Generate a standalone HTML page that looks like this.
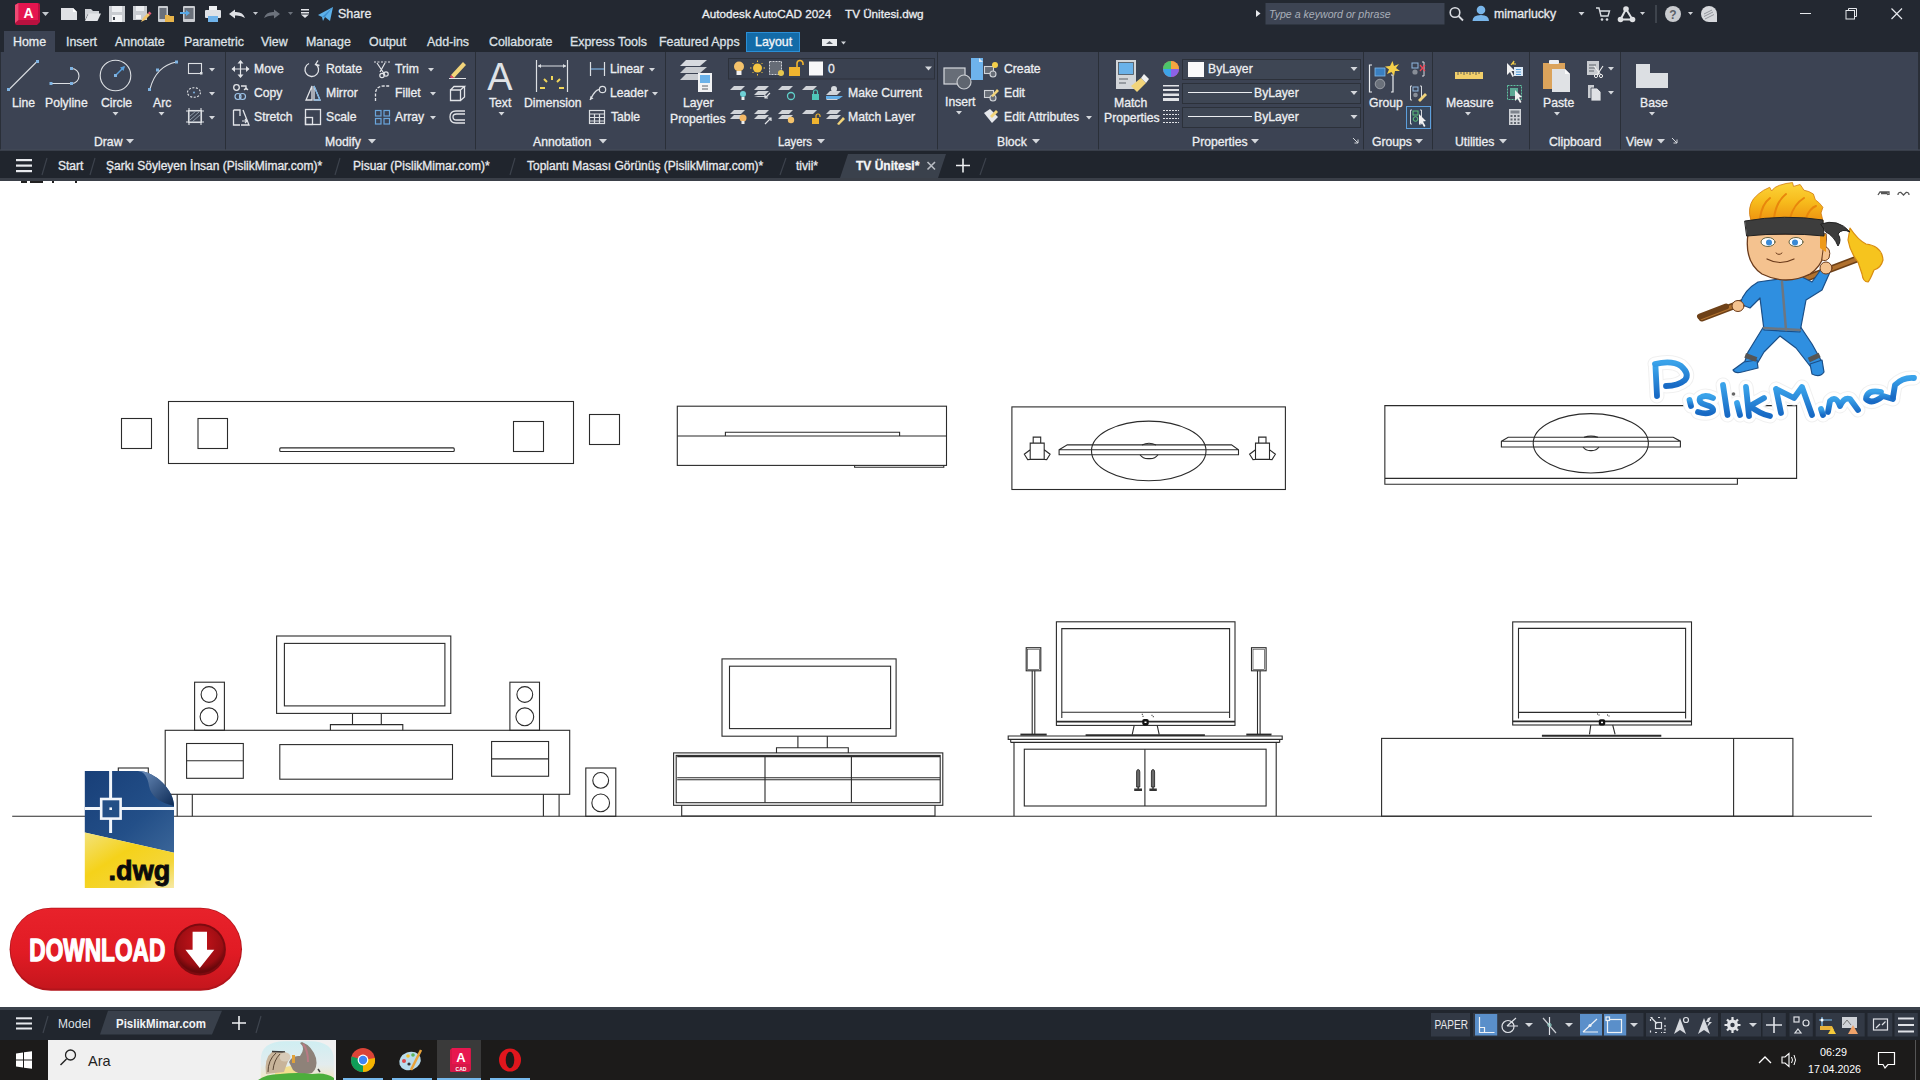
<!DOCTYPE html>
<html><head><meta charset="utf-8">
<style>
*{margin:0;padding:0;box-sizing:border-box}
html,body{width:1920px;height:1080px;overflow:hidden;background:#fff;font-family:"Liberation Sans",sans-serif}
svg{position:absolute;left:0;top:0}
text{font-family:"Liberation Sans",sans-serif}

</style></head><body>
<svg width="1920" height="1080" viewBox="0 0 1920 1080">
<!-- backgrounds -->
<rect x="0" y="0" width="1920" height="52" fill="#232831"/>
<rect x="0" y="52" width="1920" height="99" fill="#2a2f38"/>
<rect x="4" y="31" width="51" height="21" fill="#3c4353"/>
<g fill="#3c4353">
<rect x="1" y="52" width="224" height="98"/>
<rect x="226" y="52" width="249" height="98"/>
<rect x="476" y="52" width="189" height="98"/>
<rect x="666" y="52" width="271" height="98"/>
<rect x="938" y="52" width="160" height="98"/>
<rect x="1099" y="52" width="264" height="98"/>
<rect x="1364" y="52" width="68" height="98"/>
<rect x="1433" y="52" width="96" height="98"/>
<rect x="1530" y="52" width="90" height="98"/>
<rect x="1621" y="52" width="297" height="98"/>
</g>
<rect x="0" y="149" width="1920" height="2" fill="#434a58" opacity="0.55"/>
<rect x="0" y="151" width="1920" height="27" fill="#20252d"/>
<rect x="0" y="178" width="1920" height="3" fill="#3a3f48"/>

<!-- ===== TITLE BAR ===== -->
<g>
  <path d="M15,5 L18,3 H38 Q40,3 40,5 V22 L37,25 H17 Q15,25 15,23 Z" fill="#b8113f"/>
  <path d="M18.5,3 H37 Q38,3 38,4 V20 H18.5 Z" fill="#e5154f"/>
  <path d="M15,5 L18.5,3 V20 L15,23 Z" fill="#f04a74"/>
  <text x="28.5" y="17.5" font-size="14" font-weight="700" fill="#fff" text-anchor="middle">A</text>
  <path d="M42,12 H49 L45.5,16 Z" fill="#c4c8ce"/>
  <!-- new -->
  <path d="M61,8 H73 L77,12 V20 H61 Z" fill="#dfe1e5"/>
  <path d="M73,8 V12 H77 Z" fill="#ffffff"/>
  <!-- open -->
  <path d="M85,9 H91 L93,11 H99 V14 H88 L85,20 Z" fill="#cfd2d7"/>
  <path d="M85,21 L88.5,13.5 H101 L97.5,21 Z" fill="#e3e5e9"/>
  <!-- save -->
  <rect x="109" y="6" width="16" height="16" fill="#c9ccd1"/>
  <rect x="112" y="6" width="10" height="6" fill="#eceef1"/>
  <rect x="112" y="15" width="10" height="7" fill="#f4f5f7"/>
  <rect x="113" y="17" width="2" height="3" fill="#3a3f48"/>
  <!-- save as -->
  <rect x="133" y="6" width="14" height="14" fill="#c9ccd1"/>
  <rect x="136" y="6" width="8" height="5" fill="#eceef1"/>
  <rect x="136" y="15" width="5" height="4" fill="#f4f5f7"/>
  <path d="M141,22 L143,18 L148,13 L150,15 L145,20 Z" fill="#f2c46b"/>
  <path d="M148,13 L149.5,11.5 L151.5,13.5 L150,15 Z" fill="#e85b7a"/>
  <!-- sheet/tablet with folder -->
  <rect x="158" y="6" width="10" height="16" rx="1" fill="#c9ccd1"/>
  <rect x="159.5" y="8" width="7" height="11" fill="#6a707a"/>
  <path d="M165,15 H169 L170,16 H174 V22 H165 Z" fill="#e8b44a"/>
  <!-- tablet with arrow -->
  <rect x="183" y="6" width="12" height="16" rx="1" fill="#c9ccd1"/>
  <rect x="184.5" y="8" width="9" height="11" fill="#6a707a"/>
  <path d="M180,12 H186 V10 L190,13 L186,16 V14 H180 Z" fill="#59a9e6"/>
  <!-- plot -->
  <rect x="209" y="6" width="8" height="5" fill="#eef0f2"/>
  <rect x="205" y="10" width="16" height="8" rx="1" fill="#dfe2e6"/>
  <rect x="208" y="16" width="10" height="6" fill="#6fb3ea"/>
  <!-- undo -->
  <path d="M229,14 L235,9.5 V12 Q243,11.5 245,18 Q241,15 235,15.5 V18.5 Z" fill="#dfe1e5"/>
  <path d="M253,12 H258 L255.5,15 Z" fill="#c4c8ce"/>
  <!-- redo -->
  <path d="M280,14 L274,9.5 V12 Q266,11.5 264,18 Q268,15 274,15.5 V18.5 Z" fill="#6c727c"/>
  <path d="M288,12 H293 L290.5,15 Z" fill="#6c727c"/>
  <!-- customize -->
  <rect x="301" y="9" width="8" height="1.5" fill="#e2e4e8"/>
  <rect x="301" y="12" width="8" height="1.5" fill="#e2e4e8"/>
  <path d="M301,14.5 H309 L305,18 Z" fill="#e2e4e8"/>
  <!-- share -->
  <path d="M318,15 L333,7 L330,21 L325,17 L323,21 L322,17 Z" fill="#5db1ea"/>
  <path d="M322,17 L333,7 L325,17 Z" fill="#3d8fd0"/>
  <text x="338" y="18" font-size="12.5" fill="#e6e8ec" stroke="#e6e8ec" stroke-width="0.3">Share</text>

  <text x="702" y="18" font-size="11.7" fill="#eceef1" stroke="#eceef1" stroke-width="0.3">Autodesk AutoCAD 2024</text>
  <text x="845" y="18" font-size="11.7" fill="#eceef1" stroke="#eceef1" stroke-width="0.3">TV Ünitesi.dwg</text>

  <path d="M1256,10 L1260.5,13.5 L1256,17 Z" fill="#e6e8ec"/>
  <rect x="1265.5" y="3" width="179" height="21.5" fill="#3d4453"/>
  <text x="1269" y="18" font-size="10.6" font-style="italic" fill="#a9afb9">Type a keyword or phrase</text>
  <circle cx="1455" cy="12.5" r="4.8" fill="none" stroke="#d8dbe0" stroke-width="1.6"/>
  <path d="M1458.5,16 L1463,20.5" stroke="#d8dbe0" stroke-width="1.8"/>
  <circle cx="1481" cy="10" r="4.3" fill="#79b6ea"/>
  <path d="M1472.5,21 Q1472.5,15 1481,15 Q1489,15 1489,21 Z" fill="#79b6ea"/>
  <text x="1494" y="18" font-size="12.3" fill="#e8eaee" stroke="#e8eaee" stroke-width="0.3">mimarlucky</text>
  <path d="M1578.5,12 H1584.5 L1581.5,15.5 Z" fill="#d0d3d8"/>
  <path d="M1596,8 H1599 L1601,16 H1608 L1609.5,11 H1600" fill="none" stroke="#d8dbe0" stroke-width="1.4"/>
  <circle cx="1602" cy="19.5" r="1.3" fill="#d8dbe0"/><circle cx="1607" cy="19.5" r="1.3" fill="#d8dbe0"/>
  <path d="M1626,9 L1620.5,19.5 H1632.5 Z" fill="none" stroke="#dfe1e4" stroke-width="2"/><circle cx="1626" cy="9" r="2.8" fill="#dfe1e4"/><circle cx="1620.5" cy="19.5" r="2.8" fill="#dfe1e4"/><circle cx="1632.5" cy="19.5" r="2.8" fill="#dfe1e4"/>
  <path d="M1640,12 H1645 L1642.5,15 Z" fill="#d0d3d8"/>
  <rect x="1655.5" y="5" width="1" height="18" fill="#5a606a"/>
  <circle cx="1673" cy="14" r="8" fill="#c9cbcf"/>
  <text x="1673" y="18.5" font-size="12" font-weight="700" fill="#5b6068" text-anchor="middle">?</text>
  <path d="M1688,12 H1693 L1690.5,15 Z" fill="#d0d3d8"/>
  <circle cx="1709" cy="14" r="8" fill="#d6d8dc"/><rect x="1709" y="14" width="8" height="8" fill="#d6d8dc"/>
  <path d="M1704,14 L1712,10 M1704,16.5 L1713,12 M1705,19 L1714,14.5" stroke="#8a8e95" stroke-width="0.9"/>
  <rect x="1800" y="13" width="11" height="1" fill="#e6e8ec"/>
  <rect x="1846" y="10.5" width="8.5" height="8.5" fill="none" stroke="#e6e8ec" stroke-width="1"/>
  <path d="M1848.5,10.5 V8.5 H1856.5 V16.5 H1854.5" fill="none" stroke="#e6e8ec" stroke-width="1"/>
  <path d="M1891.5,8.5 L1902,19 M1902,8.5 L1891.5,19" stroke="#e6e8ec" stroke-width="1.2"/>
</g>

<!-- ===== TABS ===== -->
<g font-size="12.4" fill="#dde0e5" stroke="#dde0e5" stroke-width="0.3">
  <text x="13" y="46" fill="#f2f3f5">Home</text>
  <text x="66" y="46">Insert</text>
  <text x="115" y="46">Annotate</text>
  <text x="184" y="46">Parametric</text>
  <text x="261" y="46">View</text>
  <text x="306" y="46">Manage</text>
  <text x="369" y="46">Output</text>
  <text x="427" y="46">Add-ins</text>
  <text x="489" y="46">Collaborate</text>
  <text x="570" y="46">Express Tools</text>
  <text x="659" y="46">Featured Apps</text>
</g>
<rect x="746" y="32" width="54" height="20" fill="#136ba8"/>
<rect x="746.5" y="32.5" width="53" height="19" fill="none" stroke="#2b8fd6" stroke-width="1"/>
<text x="755" y="46" font-size="12.4" fill="#f2f5f8" stroke="#f2f5f8" stroke-width="0.3">Layout</text>
<rect x="822" y="39" width="15" height="7" fill="#e9ebee"/>
<path d="M826,44 L829.5,41 L833,44 Z" fill="#555b64"/>
<path d="M841,41.5 H846 L843.5,44.5 Z" fill="#d0d3d8"/>
<!-- dropdown bgs -->
<rect x="728.5" y="58.5" width="206" height="20.5" fill="#3a4150" stroke="#2c313b"/>
<g fill="#3e4654" stroke="#2c313a" stroke-width="1">
  <rect x="1182.5" y="59.5" width="178" height="20"/>
  <rect x="1182.5" y="83.5" width="178" height="20"/>
  <rect x="1182.5" y="107.5" width="178" height="20"/>
</g>
<!-- ===== RIBBON LABELS ===== -->
<g font-size="12.2" fill="#eceef1" stroke="#eceef1" stroke-width="0.3">
  <text x="12" y="107">Line</text>
  <text x="45" y="107">Polyline</text>
  <text x="101" y="107">Circle</text>
  <text x="153" y="107">Arc</text>
  <text x="94" y="146">Draw</text>
  <text x="254" y="73">Move</text><text x="326" y="73">Rotate</text><text x="395" y="73">Trim</text>
  <text x="254" y="97">Copy</text><text x="326" y="97">Mirror</text><text x="395" y="97">Fillet</text>
  <text x="254" y="121">Stretch</text><text x="326" y="121">Scale</text><text x="395" y="121">Array</text>
  <text x="325" y="146">Modify</text>
  <text x="489" y="107">Text</text>
  <text x="524" y="107">Dimension</text>
  <text x="610" y="73">Linear</text><text x="610" y="97">Leader</text><text x="611" y="121">Table</text>
  <text x="533" y="146">Annotation</text>
  <text x="683" y="107">Layer</text><text x="670" y="122.5">Properties</text>
  <text x="828" y="73">0</text>
  <text x="848" y="97">Make Current</text><text x="848" y="121">Match Layer</text>
  <text x="778" y="146" textLength="34" lengthAdjust="spacingAndGlyphs">Layers</text>
  <text x="945" y="106">Insert</text>
  <text x="1004" y="73">Create</text><text x="1004" y="97">Edit</text><text x="1004" y="121">Edit Attributes</text>
  <text x="997" y="146">Block</text>
  <text x="1114" y="107">Match</text><text x="1104" y="122.3">Properties</text>
  <text x="1208" y="73">ByLayer</text><text x="1254" y="97">ByLayer</text><text x="1254" y="121">ByLayer</text>
  <text x="1192" y="146">Properties</text>
  <text x="1369" y="107">Group</text>
  <text x="1372" y="146">Groups</text>
  <text x="1446" y="107">Measure</text>
  <text x="1455" y="146">Utilities</text>
  <text x="1543" y="107">Paste</text>
  <text x="1549" y="146">Clipboard</text>
  <text x="1640" y="107">Base</text>
  <text x="1626" y="146">View</text>
</g>
<!-- dropdown arrows -->
<g fill="#d4d7dc">
  <path d="M112.5,112 H118.5 L115.5,115.5 Z"/>
  <path d="M158.5,112 H164.5 L161.5,115.5 Z"/>
  <path d="M209,68 H215 L212,71.5 Z"/><path d="M209,92 H215 L212,95.5 Z"/><path d="M209,116 H215 L212,119.5 Z"/>
  <path d="M126,139 H134 L130,143.5 Z"/>
  <path d="M428,68 H434 L431,71.5 Z"/><path d="M430,92 H436 L433,95.5 Z"/><path d="M430,116 H436 L433,119.5 Z"/>
  <path d="M368,139 H376 L372,143.5 Z"/>
  <path d="M498.5,112 H504.5 L501.5,115.5 Z"/>
  <path d="M649,68 H655 L652,71.5 Z"/><path d="M652,92 H658 L655,95.5 Z"/>
  <path d="M599,139 H607 L603,143.5 Z"/>
  <path d="M817,139 H825 L821,143.5 Z"/>
  <path d="M956,111 H962 L959,114.5 Z"/>
  <path d="M1086,116 H1092 L1089,119.5 Z"/>
  <path d="M1032,139 H1040 L1036,143.5 Z"/>
  <path d="M1251,139 H1259 L1255,143.5 Z"/>
  <path d="M1415,139 H1423 L1419,143.5 Z"/>
  <path d="M1465,112 H1471 L1468,115.5 Z"/>
  <path d="M1499,139 H1507 L1503,143.5 Z"/>
  <path d="M1554,112 H1560 L1557,115.5 Z"/>
  <path d="M1608,67 H1614 L1611,70.5 Z"/><path d="M1608,91 H1614 L1611,94.5 Z"/>
  <path d="M1649,112 H1655 L1652,115.5 Z"/>
  <path d="M1657,139 H1665 L1661,143.5 Z"/>
</g>
<g stroke="#d4d7dc" stroke-width="1" fill="none">
  <path d="M1353,138 L1358,143 M1358,139.5 V143 H1354.5"/>
  <path d="M1672,138 L1677,143 M1677,139.5 V143 H1673.5"/>
</g>

<!-- ===== DRAW ICONS ===== -->
<g stroke="#dcdfe3" stroke-width="1.1" fill="none">
  <path d="M9,89.5 L37,61.5"/>
  <path d="M52,83.5 H71.5 M71.5,68.5 A7.5,7.5 0 0 1 71.5,83.5"/>
  <circle cx="115.5" cy="75.5" r="15.3"/>
  <path d="M150,89 Q156,66 176.5,62"/>
  <rect x="188.5" y="63.5" width="13" height="10"/>
  <ellipse cx="194" cy="92.5" rx="6.5" ry="4.8" stroke-dasharray="2,1.5"/>
  <rect x="188.5" y="110.5" width="13" height="12"/>
  <path d="M186,111 H204 M186,122 H204 M189,108 V125 M201,108 V125"/>
</g>
<g stroke="#9aa7b4" stroke-width="0.9">
  <path d="M190,120 L199,112 M192,122 L201,114 M189,117 L196,111"/>
</g>
<path d="M115.5,75.5 L124,67" stroke="#59a2e0" stroke-width="1.4"/>
<path d="M125,66 L120,67.5 L123.5,71 Z" fill="#59a2e0"/>
<g fill="#7fb3e2">
  <rect x="7" y="88" width="3" height="3"/><rect x="36" y="60" width="3" height="3"/>
  <rect x="49.5" y="82" width="3" height="3"/><rect x="70" y="82" width="3" height="3"/><rect x="70" y="67" width="3" height="3"/>
  <rect x="114" y="74" width="3" height="3"/>
  <rect x="148" y="88" width="3" height="3"/><rect x="156" y="68.5" width="3" height="3"/><rect x="175" y="60.5" width="3" height="3"/>
  <rect x="200" y="72" width="2.5" height="2.5" fill="#dcdfe3"/>
  <circle cx="194" cy="92.5" r="1"/>
</g>

<!-- ===== MODIFY ICONS ===== -->
<g stroke="#e2e4e8" stroke-width="1.2" fill="none">
  <!-- move -->
  <path d="M240.5,61 V77 M232.5,69 H248.5"/>
</g>
<g fill="#e2e4e8">
  <path d="M240.5,60 L237.5,63.5 H243.5 Z M240.5,78 L237.5,74.5 H243.5 Z M231.5,69 L235,66 V72 Z M249.5,69 L246,66 V72 Z"/>
</g>
<g stroke="#e2e4e8" stroke-width="1.3" fill="none">
  <!-- rotate -->
  <path d="M315.5,64 A6.8,6.8 0 1 1 309,63.5"/>
  <!-- copy -->
  <circle cx="236.5" cy="87.5" r="2.8"/><path d="M241,86 H246 V90"/>
  <!-- mirror -->
  <path d="M312,86 V100 H306 Z M314,86 V100 H320 Z"/>
  <!-- fillet -->
  <path d="M375.5,101 V94 Q375.5,86 384,86 H390" stroke-dasharray="3,1.5"/>
  <!-- stretch -->
  <path d="M233.5,110 H240 V116 M233.5,110 V125 H240 M243,110 L249,125 H241"/>
  <!-- scale -->
  <rect x="305.5" y="109.5" width="15" height="15"/>
  <rect x="305.5" y="117.5" width="7" height="7"/>
  <!-- offset -->
  <path d="M465,111 H456 Q450,111 450,117 Q450,123 456,123 H465 M465,114 H456.5 Q453,114 453,117 Q453,120 456.5,120 H465"/>
  <!-- explode 3d box -->
  <path d="M450.5,90 H460.5 V100.5 H450.5 Z M450.5,90 L454,86.5 H464.5 L460.5,90 M464.5,86.5 V97 L460.5,100.5"/>
</g>
<path d="M318,60.5 L315.5,64.5 L319.5,65.5" stroke="#e2e4e8" stroke-width="1.3" fill="none"/>
<g stroke="#9ec5ea" stroke-width="1.2" fill="none">
  <circle cx="238" cy="96.5" r="3"/><circle cx="242.5" cy="96.5" r="3"/>
  <path d="M314,86 L320,100 H314" stroke="#74b2e6"/>
  <rect x="375.5" y="110.5" width="5.5" height="5.5" stroke="#6aa6dc"/><rect x="384" y="110.5" width="5.5" height="5.5" stroke="#6aa6dc"/>
  <rect x="375.5" y="118.5" width="5.5" height="5.5" stroke="#6aa6dc"/><rect x="384" y="118.5" width="5.5" height="5.5" stroke="#6aa6dc"/>
  <path d="M242,121 H247 M245,119 L247,121 L245,123" stroke="#e2e4e8"/>
</g>
<g stroke="#e2e4e8" stroke-width="1.2" fill="none">
  <path d="M246,88 L244,90 M246,88 L248,90" />
  <!-- trim scissors -->
  <path d="M374,62 H390" stroke-dasharray="2,1.5"/>
  <path d="M377,63 L385,75 M385,63 L380,72"/>
  <circle cx="382" cy="75.5" r="2.2"/><circle cx="386" cy="74" r="2.2"/>
</g>
<!-- erase -->
<path d="M451,75 L463,62 L466,65 L454,78 Z" fill="#f2d47a"/>
<path d="M451,75 L454,78 L452.5,79 L450,77 Z" fill="#e9455e"/>
<rect x="449" y="78" width="17" height="1" fill="#e2e4e8"/>

<!-- ===== ANNOTATION ICONS ===== -->
<text x="500" y="90" font-size="38" fill="#dfe2e6" text-anchor="middle">A</text>
<g stroke="#dcdfe3" stroke-width="1.2" fill="none">
  <path d="M536.5,60 V92 M567.5,60 V92 M538,66 H566"/>
  <path d="M590.5,62 V76 M604.5,62 V76" />
  <path d="M590,100 Q596,88 600,90" />
  <circle cx="602.5" cy="89.5" r="3.2"/>
  <rect x="589.5" y="110.5" width="15" height="13"/>
  <path d="M589.5,114 H604.5 M589.5,117.5 H604.5 M589.5,121 H604.5 M594.5,114 V123.5 M599.5,114 V123.5"/>
</g>
<path d="M538,66 L541,64 V68 Z M566,66 L563,64 V68 Z" fill="#dcdfe3"/>
<path d="M591,69 H604" stroke="#7fb3e2" stroke-width="1.2"/>
<path d="M590,100 L590.5,96 L593.5,98.5 Z" fill="#dcdfe3"/>
<g stroke="#f1d65a" stroke-width="2">
  <path d="M552,76 V80 M544,79 L547,82 M560,79 L557,82 M540,88 H545 M559,88 H564"/>
</g>

<!-- ===== LAYERS ===== -->
<g fill="#d7dadf">
  <path d="M686,60 H707 L700,66 H680 Z"/>
  <path d="M686,67 H707 L700,73 H680 Z" fill="#c9ccd1"/>
  <path d="M686,74 H705 V80 H680 Z" fill="#c9ccd1"/>
</g>
<rect x="698" y="73" width="14" height="19" fill="#f1f2f4"/>
<rect x="700" y="75" width="10" height="8" fill="#6ab2ea"/>
<path d="M702,86 H708 M702,89 H708" stroke="#5a6068" stroke-width="1"/>
<path d="M925,66.5 H932 L928.5,70.5 Z" fill="#d4d7dc"/>
<circle cx="739" cy="66.5" r="5" fill="#f4c26b"/><rect x="736.5" y="71" width="5" height="4" fill="#f0f0f0"/>
<circle cx="757.5" cy="68" r="4.5" fill="#f4c543"/>
<g stroke="#f4c543" stroke-width="1"><path d="M757.5,60.5 V62 M757.5,74 V75.5 M750,68 H751.5 M763.5,68 H765 M752.5,63 L753.5,64 M762.5,63 L761.5,64 M752.5,73 L753.5,72 M762.5,73 L761.5,72"/></g>
<rect x="769.5" y="61.5" width="12" height="13" fill="#666c76" stroke="#d0d3d8" stroke-dasharray="2,1"/>
<circle cx="781" cy="73" r="3" fill="#e8c84f"/>
<rect x="789" y="67" width="11" height="9" fill="#f0b42f"/>
<path d="M797,67 V63.5 A3,3 0 0 1 803,63.5 V65" stroke="#f0b42f" stroke-width="1.6" fill="none"/>
<rect x="809" y="61.5" width="14" height="14" fill="#f7f7f8"/>
<!-- layer small icons rows -->
<g fill="#d0d3d8">
  <path d="M734,86 H745 L741,90 H730 Z"/><path d="M758,86 H769 L765,90 H754 Z"/><path d="M782,86 H793 L789,90 H778 Z"/><path d="M806,86 H817 L813,90 H802 Z"/>
  <path d="M758,91 H769 L765,95 H754 Z"/><path d="M758,96 H769 L765,97 H754 Z"/>
  <path d="M734,110 H745 L741,114 H730 Z"/><path d="M734,115 H745 L741,119 H730 Z"/>
  <path d="M758,110 H769 L765,114 H754 Z"/><path d="M758,115 H769 L765,119 H754 Z"/>
  <path d="M782,110 H793 L789,114 H778 Z"/><path d="M782,115 H793 L789,119 H778 Z"/>
  <path d="M806,110 H817 L813,114 H802 Z"/>
  <path d="M830,91 H841 L837,95 H826 Z"/><path d="M830,96 H841 L837,100 H826 Z"/>
  <path d="M830,110 H841 L837,114 H826 Z"/><path d="M830,115 H841 L837,119 H826 Z"/>
</g>
<circle cx="743" cy="94" r="3" fill="#6fd0d6"/><rect x="741.5" y="97" width="3" height="3" fill="#eee"/>
<path d="M770,93 L765,98 M765,95 V98 H768" stroke="#e2e4e8" stroke-width="1.2" fill="none"/>
<circle cx="791" cy="96" r="3.5" fill="none" stroke="#5fd0c9" stroke-width="1.3"/>
<rect x="812" y="94" width="7" height="6" fill="#4fc6b9"/>
<path d="M813.5,94 V92 A2,2 0 0 1 817.5,92 V94" stroke="#4fc6b9" stroke-width="1.2" fill="none"/>
<circle cx="834" cy="89" r="3" fill="#d8dbe0"/>
<path d="M826,96 H843 L839,99 H826" fill="#62aee8"/>
<circle cx="743" cy="118" r="3.5" fill="#f4b866"/><rect x="741.5" y="121" width="3" height="3" fill="#eee"/>
<path d="M765,124 L771,118 M768,118 H771 V121" stroke="#e2e4e8" stroke-width="1.2" fill="none"/>
<circle cx="791" cy="120" r="3.2" fill="#f4c26b"/>
<rect x="812" y="118" width="7" height="6" fill="#f0b42f"/>
<path d="M816,118 V116 A2,2 0 0 1 820,116 V117" stroke="#f0b42f" stroke-width="1.2" fill="none"/>
<path d="M837,124 L843,117 L845,119 L839,125 Z" fill="#f2d47a"/>

<!-- ===== BLOCK ===== -->
<rect x="971" y="58" width="12" height="22" fill="#6eb3ec"/>
<path d="M979,58 L983,62 H979 Z" fill="#dbe9f6"/>
<rect x="944" y="68" width="21" height="16" fill="#676d77" stroke="#d6d9de" stroke-width="1.2"/>
<circle cx="964" cy="82" r="7" fill="#5f656f" stroke="#c9ccd1" stroke-width="1.2"/>
<g stroke="#d0d3d8" stroke-width="1.1" fill="#666c76">
  <rect x="984.5" y="66.5" width="9" height="7"/><circle cx="993" cy="74" r="3"/>
  <rect x="984.5" y="90.5" width="9" height="7"/><circle cx="993" cy="98" r="3"/>
</g>
<circle cx="995" cy="65" r="3" fill="#f4cf4a"/>
<path d="M991,96 L997,89 L999,91 L993,97 Z" fill="#f2d47a"/>
<path d="M984,113 L990,109 L998,117 L992,123 Z" fill="#e6e8ec"/>
<path d="M990,116 L996,110 L998,112 L992,118 Z" fill="#f2d47a"/>

<!-- ===== PROPERTIES ===== -->
<rect x="1116" y="60" width="20" height="29" fill="#d3d6da"/>
<rect x="1118.5" y="62.5" width="15" height="12" fill="#6ab2ea" stroke="#4b5159" stroke-width="0.8"/>
<path d="M1119,79 H1128 M1119,83 H1126" stroke="#5a6068" stroke-width="1"/>
<path d="M1131,86 L1141,78 L1146,83 L1137,92 Z" fill="#f2d47a"/>
<path d="M1141,78 L1144,74 L1149,79 L1146,83 Z" fill="#f0f0f0"/>
<circle cx="1171" cy="69" r="8" fill="#e85b5b"/>
<path d="M1171,69 L1171,61 A8,8 0 0 1 1179,69 Z" fill="#f4a640"/>
<path d="M1171,69 L1179,69 A8,8 0 0 1 1171,77 Z" fill="#8b62e8"/>
<path d="M1171,69 L1171,77 A8,8 0 0 1 1163,69 Z" fill="#3da4e8"/>
<path d="M1171,69 L1163,69 A8,8 0 0 1 1171,61 Z" fill="#4cc46a"/>
<g fill="#e2e4e8"><rect x="1163" y="85" width="16" height="1.5"/><rect x="1163" y="89" width="16" height="2"/><rect x="1163" y="93.5" width="16" height="2.5"/><rect x="1163" y="98" width="16" height="3"/></g>
<g stroke="#e2e4e8" stroke-width="1" stroke-dasharray="2,1"><path d="M1163,110.5 H1179 M1163,114.5 H1179 M1163,118.5 H1179 M1163,122.5 H1179"/></g>
<rect x="1188" y="62" width="16" height="15" fill="#fafafa"/>
<path d="M1188,92.5 H1252 M1188,116.5 H1252" stroke="#eceef1" stroke-width="1"/>
<g fill="#d4d7dc"><path d="M1350.5,67 H1357.5 L1354,71 Z"/><path d="M1350.5,91 H1357.5 L1354,95 Z"/><path d="M1350.5,115 H1357.5 L1354,119 Z"/></g>

<!-- ===== GROUPS ===== -->
<path d="M1372,65 H1369.5 V92 H1372 M1391,75 H1393 V92 H1391" stroke="#eceef1" stroke-width="1.2" fill="none"/>
<rect x="1375" y="68" width="10" height="8" fill="#3a7fc0" stroke="#7fb8ea" stroke-width="0.8"/>
<circle cx="1380" cy="84" r="4.8" fill="#6b717b" stroke="#a7abb2" stroke-width="0.8"/>
<path d="M1392.5,61 L1394,66 L1399,64 L1396,68 L1400,71 L1395,71 L1394,76 L1391.5,72 L1387,74 L1389,69.5 L1385,66.5 L1390,66 Z" fill="#f4cf4a"/>
<g stroke="#d6d9de" stroke-width="1" fill="none">
  <path d="M1422,62 H1424 V76 H1422"/>
  <path d="M1412,86 H1410.5 V100 H1412 M1420,86 H1421.5 V100 H1420"/>
</g>
<rect x="1412" y="63" width="6" height="5" fill="none" stroke="#8fb8e0"/>
<circle cx="1415" cy="72" r="2.6" fill="#888e98"/>
<path d="M1420,65 L1425,71 M1425,65 L1420,71" stroke="#ee4455" stroke-width="1.2"/>
<rect x="1413" y="87" width="5" height="4" fill="none" stroke="#8fb8e0"/><circle cx="1415.5" cy="95" r="2.3" fill="#888e98"/>
<path d="M1418,100 L1425,93 L1427,95 L1420,102 Z" fill="#f2d47a"/>
<rect x="1406.5" y="106.5" width="24" height="22" fill="#37475c" stroke="#5d9fdc" stroke-width="1"/>
<path d="M1412,110 H1410.5 V124 H1412 M1420,110 H1421.5 V124 H1420" stroke="#d6d9de" stroke-width="1" fill="none"/>
<rect x="1413" y="111" width="5" height="4" fill="none" stroke="#5fc27a"/><circle cx="1415.5" cy="119" r="2.3" fill="none" stroke="#5fc27a"/>
<path d="M1419,114 L1419,125 L1421.5,122.5 L1424,127 L1425.5,126 L1423,121.5 L1426,121 Z" fill="#f0f0f0"/>

<!-- ===== UTILITIES ===== -->
<rect x="1455" y="72" width="28" height="7" fill="#f2cf6a"/>
<path d="M1458,72 V75 M1461,72 V74 M1464,72 V75 M1467,72 V74 M1470,72 V75 M1473,72 V74 M1476,72 V75 M1479,72 V74" stroke="#3b4351" stroke-width="0.8"/>
<path d="M1507,63 L1507,75 L1510,72 L1512.5,77 L1514,76 L1511.5,71 L1515,71 Z" fill="#f0f0f0"/>
<rect x="1514" y="67" width="9" height="9" fill="#dce9f6"/>
<path d="M1516,69.5 H1521 M1516,72 H1521 M1516,74.5 H1521" stroke="#3d8fd0" stroke-width="0.9"/>
<path d="M1511,65 L1514,61 L1513,64 L1516,64" stroke="#f4cf4a" stroke-width="1.2" fill="none"/>
<rect x="1507.5" y="85.5" width="14" height="14" fill="none" stroke="#5fc2a0" stroke-dasharray="2,1"/>
<rect x="1510" y="88" width="8" height="8" fill="#5aa894"/>
<path d="M1515,90 L1515,101 L1517.5,98.5 L1520,103 L1521.5,102 L1519,97.5 L1522,97 Z" fill="#f0f0f0"/>
<rect x="1509" y="109" width="12" height="16" fill="#cfd2d7"/>
<rect x="1510.5" y="110.5" width="9" height="3" fill="#7d838c"/>
<g fill="#5e646d"><rect x="1510.5" y="115" width="2" height="2"/><rect x="1514" y="115" width="2" height="2"/><rect x="1517.5" y="115" width="2" height="2"/><rect x="1510.5" y="118.5" width="2" height="2"/><rect x="1514" y="118.5" width="2" height="2"/><rect x="1517.5" y="118.5" width="2" height="2"/><rect x="1510.5" y="122" width="2" height="2"/><rect x="1514" y="122" width="2" height="2"/><rect x="1517.5" y="122" width="2" height="2"/></g>

<!-- ===== CLIPBOARD ===== -->
<rect x="1543" y="63" width="22" height="26" fill="#dba35b"/>
<rect x="1549" y="60" width="10" height="4" rx="1" fill="#eceef1"/>
<path d="M1552,69 H1565 L1570,74 V92 H1552 Z" fill="#e0e2e5"/>
<path d="M1565,69 V74 H1570 Z" fill="#fafafa"/>
<rect x="1587" y="61" width="12" height="14" fill="#c9ccd1"/>
<path d="M1589,65 H1596 M1589,68 H1595 M1589,71 H1594" stroke="#5a6068" stroke-width="1"/>
<path d="M1594,66 L1601,75 M1603,66 L1597,75" stroke="#f0f0f0" stroke-width="1.1"/>
<circle cx="1596" cy="76" r="1.6" fill="none" stroke="#f0f0f0"/><circle cx="1601" cy="76" r="1.6" fill="none" stroke="#f0f0f0"/>
<path d="M1588,85 H1594 V98 H1588 Z" fill="#c9ccd1"/>
<path d="M1591,88 H1597 L1601,92 V101 H1591 Z" fill="#dfe1e5" stroke="#3b4351" stroke-width="0.8"/>

<!-- ===== VIEW ===== -->
<path d="M1636,64 H1650 V73 H1668 V88 H1636 Z" fill="#dcdfe3"/>
<!-- ===== FILE TABS ===== -->
<path d="M840,178 L848,154 H946 L938,178 Z" fill="#3a414c"/>
<g fill="#e8eaee"><rect x="16" y="159" width="16" height="2.2"/><rect x="16" y="164.5" width="16" height="2.2"/><rect x="16" y="170" width="16" height="2.2"/></g>
<g stroke="#3c424c" stroke-width="1.2">
  <path d="M42,175 L47,158 M90,175 L95,158 M335,175 L340,158 M510,175 L515,158 M780,175 L786,158 M980,175 L986,158"/>
</g>
<g font-size="12" fill="#e8eaee" stroke="#e8eaee" stroke-width="0.3">
  <text x="58" y="170">Start</text>
  <text x="106" y="170">Şarkı Söyleyen İnsan (PislikMimar.com)*</text>
  <text x="353" y="170">Pisuar (PislikMimar.com)*</text>
  <text x="527" y="170">Toplantı Masası Görünüş (PislikMimar.com)*</text>
  <text x="796" y="170">tivii*</text>
  <text x="856" y="170" font-weight="700" fill="#f4f5f7" stroke="#f4f5f7">TV Ünitesi*</text>
</g>
<path d="M927.5,162 L935,169.5 M935,162 L927.5,169.5" stroke="#b9bdc4" stroke-width="1.6"/>
<path d="M963,158.5 V172.5 M956,165.5 H970" stroke="#eef0f2" stroke-width="1.6"/>
<!-- ===== DRAWING AREA ===== -->
<rect x="0" y="181" width="1920" height="826" fill="#ffffff"/>
<g fill="none" stroke="#2b2b2b" stroke-width="1.1">
  <!-- D1 -->
  <rect x="121.5" y="418.5" width="30" height="30"/>
  <rect x="168.5" y="401.5" width="405" height="62"/>
  <rect x="198" y="418.5" width="29.5" height="30"/>
  <rect x="513.5" y="421.5" width="30" height="30"/>
  <rect x="589.5" y="414.5" width="30" height="30"/>
  <rect x="279.75" y="447.9" width="174.5" height="3.6" rx="1"/>
  <!-- D2 -->
  <rect x="677.3" y="406.2" width="269.2" height="59.2"/>
  <path d="M677.3,436 H946.5"/>
  <path d="M725.4,436 V432.3 H899.6 V436"/>
  <path d="M854.6,465.4 V467.3 H943.8 V465.4"/>
  <!-- D3 -->
  <rect x="1011.9" y="406.9" width="273.5" height="82.6"/>
  <ellipse cx="1148.75" cy="450.9" rx="57.25" ry="29.8"/>
  <path d="M1059.1,449.7 L1067.3,444.9 H1231.5 L1238.5,449.7 V454.7 H1059.1 Z M1059.1,449.7 H1238.5"/>
  <path d="M1142,444.9 Q1149,441.5 1156,444.9 M1140,454.7 Q1143,459 1149,458.6 Q1155,459 1158,454.7"/>
  <path d="M1033.2,443.1 V437.1 H1040.7 V443.1 M1030.2,443.1 H1044.2 V459.4 H1030.2 Z M1030.2,449.7 L1024.3,454.2 L1027.7,459.6 L1030.2,459.4 M1044.2,449.7 L1050.1,454.2 L1046.7,459.6 L1044.2,459.4"/>
  <path d="M1258.7,443.1 V437.1 H1266 V443.1 M1255.5,443.1 H1269.5 V459.4 H1255.5 Z M1255.5,449.7 L1249.6,454.2 L1253,459.6 L1255.5,459.4 M1269.5,449.7 L1275.4,454.2 L1272,459.6 L1269.5,459.4"/>
  <!-- D4 -->
  <path d="M1384.85,405.6 H1796.6 V478.4 H1384.85 Z M1384.85,478.4 V484.3 H1737.4 V478.4"/>
  <ellipse cx="1590.8" cy="443.3" rx="57.6" ry="29.7"/>
  <path d="M1501.4,441.2 L1508.2,437.3 H1673.2 L1680.4,441.2 V447 H1501.4 Z M1501.4,441.2 H1680.4"/>
  <path d="M1584,437.3 Q1591,435 1598,437.3 M1583,447 Q1586,451 1591,450.6 Q1596,451 1599,447"/>

  <!-- floor -->
  <path d="M12.2,816.3 H1871.9"/>
  <!-- D5 -->
  <rect x="276.6" y="636" width="174.2" height="77.4"/>
  <rect x="284.4" y="643.4" width="160.5" height="62.5"/>
  <path d="M352.5,713.4 V724.6 M381.3,713.4 V724.6 M330.4,730.3 V724.6 H402.8 V730.3"/>
  <rect x="165.2" y="730.3" width="404.5" height="64"/>
  <rect x="186.6" y="743.5" width="56.7" height="34.8"/><path d="M186.6,760.7 H243.3"/>
  <rect x="279.8" y="744.6" width="172.7" height="34.6"/>
  <rect x="491.6" y="741.5" width="57" height="34.75"/><path d="M491.6,758.9 H548.6"/>
  <path d="M177.2,794.3 V816.3 M192.3,794.3 V816.3 M543.4,794.3 V816.3 M559.1,794.3 V816.3"/>
  <rect x="194.6" y="682.2" width="29.8" height="48.1"/>
  <circle cx="209" cy="694.5" r="7.9"/><circle cx="209" cy="716.8" r="8.9"/>
  <rect x="509.9" y="682.2" width="29.6" height="48.1"/>
  <circle cx="524.8" cy="694.5" r="7.9"/><circle cx="524.8" cy="716.8" r="8.9"/>
  <rect x="585.8" y="768" width="30" height="48.3"/>
  <circle cx="600.7" cy="780.4" r="7.9"/><circle cx="600.7" cy="802.9" r="8.85"/>
  <rect x="118.3" y="768" width="30" height="48.3"/>
  <!-- D6 -->
  <rect x="722" y="658.9" width="174.1" height="77.3"/>
  <rect x="729.5" y="666.2" width="161.1" height="62.4"/>
  <path d="M797.9,736.2 V747.7 M827.3,736.2 V747.7 M776.5,752.9 V747.7 H848.3 V752.9"/>
  <rect x="673.6" y="752.9" width="269.2" height="52.4"/>
  <rect x="676.2" y="755.4" width="264" height="47.3"/>
  <path d="M677.2,756.6 H765 V802.4 M677.2,777.7 H940 M677.2,779.7 H940 M851.4,756.6 V802.4 M765,756.6 H940"/>
  <path d="M681.7,805.3 V816 H935 V805.3"/>
  <!-- D7 -->
  <rect x="1056.4" y="621.8" width="178.6" height="103.6"/>
  <path d="M1061.8,718 V628.6 H1229.6 V718 M1061.8,712.2 H1229.6"/>
  <path d="M1056.4,721.6 H1235" stroke-width="1.8"/>
  <path d="M1134.2,725.4 L1132.2,734.6 M1157.2,725.4 L1159.2,734.6"/>
  <path d="M1085.6,735.2 H1204.9" stroke-width="1.8"/>
  <path d="M1008.2,736 H1282.2 V739.4 H1008.2 Z M1010.7,742.4 H1279.7 M1010.7,739.4 V742.4 M1279.7,739.4 V742.4"/>
  <path d="M1014,742.4 V816 M1276.2,742.4 V816"/>
  <rect x="1024.3" y="749.2" width="241.8" height="56.8"/>
  <path d="M1144.9,749.2 V806"/>
  
  
  <rect x="1026.2" y="647.7" width="14.6" height="23.1"/><rect x="1027.7" y="649.2" width="11.6" height="20.1" stroke-width="0.6"/>
  <path d="M1032.2,670.8 V734.5 M1034.8,670.8 V734.5"/>
  <path d="M1020.4,734.6 H1046.7" stroke-width="2"/>
  <rect x="1251.5" y="647.7" width="14.6" height="23.1"/><rect x="1253" y="649.2" width="11.6" height="20.1" stroke-width="0.6"/>
  <path d="M1257.5,670.8 V734.5 M1260.1,670.8 V734.5"/>
  <path d="M1246.3,734.6 H1271.5" stroke-width="2"/>
  <!-- D8 -->
  <rect x="1512.7" y="621.9" width="178.8" height="103.1"/>
  <path d="M1518.5,718.5 V628.4 H1685.6 V718.5 M1518.5,712.4 H1685.6"/>
  <path d="M1512.7,721.4 H1691.5" stroke-width="1.8"/>
  <path d="M1590.8,725 L1589.5,734.3 M1612.7,725 L1615.1,734.3"/>
  <path d="M1541.9,735.8 H1661.3" stroke-width="2"/>
  <rect x="1381.6" y="738.4" width="411.3" height="77.8"/>
  <path d="M1733.6,738.4 V816.2"/>
</g>
<g fill="#6a6a6a" stroke="#2b2b2b" stroke-width="0.9">
  <path d="M1136.6,772 Q1136.6,769.5 1138.2,769.5 Q1139.8,769.5 1139.8,772 V787 H1136.6 Z"/>
  <path d="M1151.4,772 Q1151.4,769.5 1153,769.5 Q1154.6,769.5 1154.6,772 V787 H1151.4 Z"/>
</g>
<g fill="#333"><rect x="1134.2" y="788.5" width="7.8" height="2.5"/><rect x="1149.4" y="788.5" width="7.4" height="2.5"/><rect x="1137.5" y="787" width="1.4" height="2"/><rect x="1152.3" y="787" width="1.4" height="2"/></g>
<g fill="#111"><rect x="1141.8" y="713.8" width="1" height="1"/><rect x="1142.5" y="715.8" width="1" height="1"/><rect x="1151.5" y="714.8" width="1" height="1"/><rect x="1152.8" y="716.2" width="1" height="1"/>
<rect x="1597" y="713.5" width="1" height="1"/><rect x="1598.5" y="714.5" width="1" height="1"/><rect x="1607" y="714.5" width="1" height="1"/><rect x="1608.5" y="715.5" width="1" height="1"/></g>
<g fill="#111">
  <rect x="1142.3" y="719" width="6.4" height="6.4" rx="1.8"/>
  <rect x="1598.8" y="719.2" width="6.4" height="6.4" rx="1.8"/>
</g>
<g fill="#fff"><rect x="1144.5" y="721.5" width="2" height="1.5"/><rect x="1601" y="721.7" width="2" height="1.5"/></g>
<!-- viewport corner glyphs -->
<g stroke="#555" stroke-width="1.3" fill="none">
  <path d="M1878,195 L1880,192 H1889 V195 M1881,193.5 H1887 L1888,195"/>
  <path d="M1898,195 Q1898,192 1901,192.5 L1903.5,195 L1906,192.5 Q1909,192 1909,195"/>
</g>
<g fill="#222"><rect x="21" y="181" width="6" height="2"/><rect x="30" y="181" width="13" height="2"/><rect x="52" y="181" width="2" height="2"/><rect x="75" y="181" width="2" height="2"/></g>

<!-- ===== DWG ICON ===== -->
<defs>
  <linearGradient id="dwgBlue" x1="0" y1="0" x2="1" y2="1">
    <stop offset="0" stop-color="#183f78"/><stop offset="0.6" stop-color="#234f88"/><stop offset="1" stop-color="#3a6598"/>
  </linearGradient>
  <linearGradient id="dwgBlue2" x1="0" y1="0" x2="0" y2="1">
    <stop offset="0" stop-color="#1b4a86"/><stop offset="1" stop-color="#4a6f98"/>
  </linearGradient>
  <linearGradient id="dwgYel" x1="0" y1="0" x2="1" y2="1">
    <stop offset="0" stop-color="#f3e27a"/><stop offset="0.4" stop-color="#f5d21a"/><stop offset="0.75" stop-color="#f4d63a"/><stop offset="1" stop-color="#f7eaa8"/>
  </linearGradient>
  <linearGradient id="fold" x1="0" y1="0" x2="1" y2="1">
    <stop offset="0" stop-color="#6d8fbd"/><stop offset="1" stop-color="#0c2a55"/>
  </linearGradient>
  <linearGradient id="dlRed" x1="0" y1="0" x2="0" y2="1">
    <stop offset="0" stop-color="#e8222b"/><stop offset="0.55" stop-color="#e11b24"/><stop offset="1" stop-color="#c5161d"/>
  </linearGradient>
  <radialGradient id="dlCirc" cx="0.5" cy="0.35" r="0.6">
    <stop offset="0" stop-color="#c8141b"/><stop offset="0.8" stop-color="#9a0d12"/><stop offset="1" stop-color="#6a080b"/>
  </radialGradient>
  <linearGradient id="hairG" x1="0" y1="0" x2="0" y2="1">
    <stop offset="0" stop-color="#fcd53a"/><stop offset="0.5" stop-color="#f7bb1c"/><stop offset="1" stop-color="#ee9210"/>
  </linearGradient>
  <linearGradient id="txtBlue" x1="0" y1="0" x2="0" y2="1">
    <stop offset="0" stop-color="#3aa3ea"/><stop offset="1" stop-color="#1769c4"/>
  </linearGradient>
</defs>
<path d="M84.8,771 H138 C155,771 174,790 174,806 V852.7 L84.8,832.6 Z" fill="url(#dwgBlue)"/>
<path d="M84.8,832.6 L174,852.7 V888 H84.8 Z" fill="url(#dwgYel)"/>
<path d="M138,771 Q147,772 149,786 Q152,801 174,806 C174,790 155,771 138,771 Z" fill="url(#fold)"/>
<path d="M110.6,771 V833" stroke="#f2f6fb" stroke-width="3"/>
<path d="M84.8,808.6 H174" stroke="#f2f6fb" stroke-width="3"/>
<rect x="101.2" y="799" width="19.4" height="19.6" fill="#234f86" stroke="#f2f6fb" stroke-width="2.6"/>
<rect x="109.4" y="807.4" width="2.6" height="2.6" fill="#f2f6fb"/>
<text x="108.6" y="879.5" font-size="27" font-weight="700" fill="#0b0b0b" stroke="#0b0b0b" stroke-width="0.9" textLength="61.6" lengthAdjust="spacingAndGlyphs">.dwg</text>

<!-- ===== DOWNLOAD BUTTON ===== -->
<rect x="9.6" y="907.7" width="232.4" height="83.1" rx="41.5" fill="#b3141b"/>
<rect x="10.5" y="908.5" width="230.5" height="80" rx="40" fill="url(#dlRed)"/>
<text x="29.3" y="961.5" font-size="29" font-weight="700" fill="#ffffff" stroke="#ffffff" stroke-width="1.3" stroke-linejoin="round" textLength="136" lengthAdjust="spacingAndGlyphs" transform="translate(0,-48.3) scale(1,1.05)">DOWNLOAD</text>
<circle cx="199.9" cy="949.4" r="26" fill="#7d0a0f"/>
<circle cx="199.9" cy="949.4" r="24" fill="url(#dlCirc)"/>
<path d="M192.6,931.8 H207 V949.8 H214.3 L199.8,968 L185.4,949.8 H192.6 Z" fill="#ffffff"/>

<!-- ===== PISLIKMIMAR CHARACTER ===== -->
<g stroke-linejoin="round" stroke-linecap="round">
  <!-- white sticker outline -->
  <path d="M1745,218 L1746,200 L1756,192 L1768,184 L1780,182 L1793,181 L1804,184 L1816,191 L1826,205 L1826,222 L1848,230 L1862,238 L1884,247 L1886,266 L1872,286 L1858,268 L1834,270 L1834,290 L1826,302 L1834,332 L1826,376 L1812,378 L1806,356 L1780,338 L1760,348 L1742,376 L1726,372 L1744,334 L1738,318 L1700,322 L1696,312 L1728,298 L1746,280 L1742,250 Z" fill="#ffffff"/>
  <!-- stick -->
  <path d="M1702,318 L1857,259" stroke="#6e4118" stroke-width="7"/>
  <path d="M1702,318 L1857,259" stroke="#b0712f" stroke-width="4"/>
  <!-- legs -->
  <path d="M1764,326 L1748,352 L1744,364 L1757,364 L1764,352 L1780,336 L1796,348 L1810,366 L1822,362 L1812,344 L1800,326 Z" fill="#2f8fe0" stroke="#1b4e86" stroke-width="1.2"/>
  <path d="M1744,362 L1733,370 Q1735,374 1742,372 L1758,368 L1757,360 Z" fill="#2f8fe0" stroke="#1b4e86" stroke-width="1.2"/>
  <path d="M1810,364 L1812,374 Q1820,378 1824,372 L1822,360 Z" fill="#2f8fe0" stroke="#1b4e86" stroke-width="1.2"/>
  <rect x="1745" y="355" width="12" height="5" fill="#555" transform="rotate(20 1751 357)"/>
  <rect x="1808" y="355" width="12" height="5" fill="#555" transform="rotate(-25 1814 357)"/>
  <!-- body -->
  <path d="M1758,282 Q1744,290 1740,304 L1750,308 L1760,298 L1764,330 L1800,332 L1806,300 L1822,290 L1830,272 L1822,268 L1812,282 L1800,276 Z" fill="#2f8fe0" stroke="#1b4e86" stroke-width="1.2"/>
  <path d="M1782,282 L1786,330" stroke="#6d7680" stroke-width="2.5"/>
  <path d="M1764,328 L1800,330" stroke="#6d7680" stroke-width="2.5"/>
  <!-- hands -->
  <ellipse cx="1738" cy="306" rx="6" ry="5.5" fill="#f4c28f" stroke="#6b3b1b" stroke-width="1"/>
  <ellipse cx="1826" cy="268" rx="6" ry="6" fill="#f4c28f" stroke="#6b3b1b" stroke-width="1"/>
  <path d="M1700,316.5 L1726,306.5" stroke="#6e4118" stroke-width="6"/>
  <!-- yellow blob -->
  <path d="M1850,228 Q1858,240 1866,244 Q1882,246 1883,260 Q1881,268 1874,270 Q1870,280 1868,282 Q1863,282 1862,274 L1858,262 Q1850,252 1848,240 Z" fill="#f6c41e" stroke="#d98d10" stroke-width="1.2"/>
  <!-- face -->
  <path d="M1748,234 Q1744,262 1762,274 Q1786,286 1810,274 Q1828,262 1826,234 Z" fill="#f4c28f" stroke="#6b3b1b" stroke-width="1.3"/>
  <path d="M1824,246 Q1832,248 1829,258 Q1826,262 1822,260 Z" fill="#f4c28f" stroke="#6b3b1b" stroke-width="1"/>
  <path d="M1820,236 L1826,234 L1826,252 L1820,248 Z" fill="#ee9a1a"/>
  <ellipse cx="1768" cy="242" rx="7" ry="4.5" fill="#fff" stroke="#553" stroke-width="0.9"/>
  <ellipse cx="1796" cy="242" rx="7" ry="4.5" fill="#fff" stroke="#553" stroke-width="0.9"/>
  <circle cx="1769" cy="242.5" r="3" fill="#3a8ad6"/><circle cx="1795" cy="242.5" r="3" fill="#3a8ad6"/>
  <path d="M1776,253 Q1779,256 1782,253" stroke="#6b3b1b" stroke-width="1" fill="none"/>
  <path d="M1767,259 Q1780,266 1794,259" stroke="#6b3b1b" stroke-width="1.2" fill="none"/>
  <!-- hair -->
  <path d="M1750.8,220 Q1747,208 1753.6,198.7 L1758.4,194 Q1763,190 1769.7,187.3 L1771.6,191 Q1774,187 1779.2,185.4 Q1786,183 1792.5,182.6 L1793.5,186.4 L1800.1,184.5 Q1802,187 1803.9,190.2 Q1809,191 1813.4,194 L1815.3,199.7 Q1820,203 1822.9,207.3 L1821,213 L1823,221 Z" fill="url(#hairG)" stroke="#d27a0c" stroke-width="0.8"/>
  <path d="M1760,218 Q1762,204 1770,198 M1774,218 Q1776,202 1786,194 M1790,218 Q1794,204 1804,198 M1806,218 Q1810,208 1816,206" stroke="#e8860c" stroke-width="2" fill="none"/>
  <!-- headband -->
  <path d="M1745,221 Q1785,214 1823,220 L1824,236 Q1785,232 1747,236 Z" fill="#3d3d3d" stroke="#222" stroke-width="1"/>
  <path d="M1821,224 Q1838,218 1850,232 Q1842,228 1838,234 Q1842,240 1838,246 Q1834,236 1826,232 Z" fill="#3d3d3d" stroke="#222" stroke-width="1"/>
</g>
<!-- text PislikMimar -->
<g fill="none" stroke-linecap="round" stroke-linejoin="round">
  <g stroke="#f0f0f0" stroke-width="15">
    <path d="M1657,396 L1655.5,367"/>
    <path d="M1655,364 Q1672,360 1681,366 Q1690,374 1685,380 Q1678,386 1666,386"/>
    <path d="M1689.5,400 L1691,406"/>
    <path d="M1713,398 Q1705,394 1700,398 Q1698,403 1706,405 Q1714,407 1713,411 Q1708,415 1698,412"/>
    <path d="M1723,385 L1727.5,415"/>
    <path d="M1737,403 L1740,415"/>
    <path d="M1746,387 L1749,416 M1764,398 L1750,406 Q1760,414 1770,416"/>
    <path d="M1776,389 L1781,413 M1776,389 L1794,398 L1802,387 L1812,415"/>
    <path d="M1821,409 L1823,415"/>
    <path d="M1828,412 L1830,401 Q1836,395 1840,406 Q1844,397 1850,399 L1858,410"/>
    <path d="M1881,392 Q1867,389 1866,399 Q1872,405 1883,396 L1893,399"/>
    <path d="M1893,397 L1895,385 Q1903,377 1914,378"/>
  </g>
  <g stroke="#ffffff" stroke-width="13">
    <path d="M1657,396 L1655.5,367"/>
    <path d="M1655,364 Q1672,360 1681,366 Q1690,374 1685,380 Q1678,386 1666,386"/>
    <path d="M1689.5,400 L1691,406"/>
    <path d="M1713,398 Q1705,394 1700,398 Q1698,403 1706,405 Q1714,407 1713,411 Q1708,415 1698,412"/>
    <path d="M1723,385 L1727.5,415"/>
    <path d="M1737,403 L1740,415"/>
    <path d="M1746,387 L1749,416 M1764,398 L1750,406 Q1760,414 1770,416"/>
    <path d="M1776,389 L1781,413 M1776,389 L1794,398 L1802,387 L1812,415"/>
    <path d="M1821,409 L1823,415"/>
    <path d="M1828,412 L1830,401 Q1836,395 1840,406 Q1844,397 1850,399 L1858,410"/>
    <path d="M1881,392 Q1867,389 1866,399 Q1872,405 1883,396 L1893,399"/>
    <path d="M1893,397 L1895,385 Q1903,377 1914,378"/>
  </g>
  <g stroke="url(#txtBlue)" stroke-width="5.8">
    <path d="M1657,396 L1655.5,367"/>
    <path d="M1655,364 Q1672,360 1681,366 Q1690,374 1685,380 Q1678,386 1666,386"/>
    <path d="M1689.5,400 L1691,406"/>
    <path d="M1713,398 Q1705,394 1700,398 Q1698,403 1706,405 Q1714,407 1713,411 Q1708,415 1698,412"/>
    <path d="M1723,385 L1727.5,415"/>
    <path d="M1737,403 L1740,415"/>
    <path d="M1746,387 L1749,416 M1764,398 L1750,406 Q1760,414 1770,416"/>
    <path d="M1776,389 L1781,413 M1776,389 L1794,398 L1802,387 L1812,415"/>
    <path d="M1821,409 L1823,415"/>
    <path d="M1828,412 L1830,401 Q1836,395 1840,406 Q1844,397 1850,399 L1858,410"/>
    <path d="M1881,392 Q1867,389 1866,399 Q1872,405 1883,396 L1893,399"/>
    <path d="M1893,397 L1895,385 Q1903,377 1914,378"/>
  </g>
</g>
<circle cx="1733.5" cy="394" r="1.8" fill="#666"/>

<!-- ===== STATUS BAR ===== -->
<rect x="0" y="1007" width="1920" height="3" fill="#3b414b"/>
<rect x="0" y="1010" width="1920" height="30" fill="#21262e"/>
<path d="M100,1034.4 L108,1010.7 H222 L212,1034.4 Z" fill="#39404b"/>
<g fill="#e8eaee"><rect x="16" y="1017.3" width="16" height="2"/><rect x="16" y="1022.5" width="16" height="2"/><rect x="16" y="1027.5" width="16" height="2"/></g>
<g stroke="#3e444e" stroke-width="1.2"><path d="M43,1033 L48,1016 M256,1033 L261,1016"/></g>
<text x="58" y="1028" font-size="12" fill="#dfe2e7">Model</text>
<text x="116" y="1028" font-size="12" font-weight="700" fill="#f2f4f6" textLength="90" lengthAdjust="spacingAndGlyphs">PislikMimar.com</text>
<path d="M239,1016 V1030 M232,1023 H246" stroke="#eef0f2" stroke-width="1.6"/>
<!-- status groups -->
<g fill="#323945">
  <rect x="1431" y="1013" width="39" height="23.5"/>
  <rect x="1473" y="1013" width="170.5" height="23.5"/>
  <rect x="1646" y="1013" width="72" height="23.5"/>
  <rect x="1721" y="1013" width="40" height="23.5"/>
  <rect x="1762.5" y="1013" width="23.3" height="23.5"/>
  <rect x="1789.5" y="1013" width="23.3" height="23.5"/>
  <rect x="1815.7" y="1013" width="49" height="23.5"/>
  <rect x="1867.5" y="1013" width="24.8" height="23.5"/>
  <rect x="1894.5" y="1013" width="23.3" height="23.5"/>
</g>
<g fill="#5a8fca">
  <rect x="1475" y="1014" width="22.2" height="21.5"/>
  <rect x="1580" y="1014" width="22" height="21.5"/>
  <rect x="1604" y="1014" width="22.2" height="21.5"/>
</g>
<text x="1434.6" y="1029" font-size="12.5" fill="#e6e8ec" textLength="33.4" lengthAdjust="spacingAndGlyphs">PAPER</text>
<g stroke="#eef2f6" stroke-width="1.2" fill="none">
  <path d="M1479.5,1017 V1032.5 H1494.5 M1479.5,1027.5 H1484.5 V1032.5"/>
  <path d="M1583,1032 H1598 M1583,1032 L1597,1019"/>
  <rect x="1607.5" y="1019.5" width="14" height="13"/>
  <rect x="1606" y="1017" width="3.5" height="3.5" fill="#5a8fca"/>
</g>
<circle cx="1590" cy="1025.5" r="1.6" fill="#eef2f6"/>
<g stroke="#dfe2e7" stroke-width="1.2" fill="none">
  <circle cx="1508" cy="1026.5" r="6"/>
  <path d="M1507,1026 L1516,1018 M1507,1026 H1518"/>
  <path d="M1549.5,1017 V1035"/>
  <path d="M1543,1018 L1556,1033" stroke="#c9ccd2"/>
</g>
<circle cx="1549.5" cy="1025" r="1.6" fill="none" stroke="#8fd4c8" stroke-width="1"/>
<g fill="#d4d7dc">
  <path d="M1525,1023 H1533 L1529,1027 Z"/><path d="M1565,1023 H1573 L1569,1027 Z"/><path d="M1630,1023 H1638 L1634,1027 Z"/>
  <path d="M1749,1023 H1757 L1753,1027 Z"/>
</g>
<g stroke="#dfe2e7" stroke-width="1.2" fill="none">
  <path d="M1650.5,1021 V1017.5 H1654 M1658,1017.5 H1661 M1665,1017.5 V1021 M1665,1025 V1032.5 H1661 M1657,1032.5 H1654 M1650.5,1032.5 V1029" stroke-dasharray="2,1.5"/>
  <rect x="1655.5" y="1022.5" width="6" height="6"/>
  <path d="M1651,1017.5 L1657,1023.5"/>
  <circle cx="1686" cy="1020" r="2.5"/>
  <path d="M1766,1025 H1782 M1774,1017 V1033" stroke-width="1.6"/>
  <rect x="1794" y="1017" width="5" height="5"/>
  <circle cx="1806" cy="1023" r="3"/>
  <path d="M1798,1029 L1801,1033 H1795 Z"/>
  <rect x="1873.5" y="1019" width="14" height="11"/>
  <path d="M1876,1028 L1880,1024 M1882,1025 L1885.5,1021.5" />
  <path d="M1898,1018.5 H1914 M1898,1025 H1914 M1898,1031.5 H1914" stroke-width="2"/>
</g>
<g fill="#d6d9de">
  <path d="M1674,1034 L1680,1018 L1686,1034 L1680,1030 Z"/>
  <path d="M1698,1034 L1704,1018 L1710,1034 L1704,1030 Z"/>
  <path d="M1708,1018 L1711,1017 L1709,1022 L1712,1022 L1707,1027 L1709,1022 L1706,1022 Z"/>
</g>
<circle cx="1732.5" cy="1025" r="5.5" fill="#e2e4e8"/>
<g stroke="#e2e4e8" stroke-width="2.2"><path d="M1732.5,1017 V1033 M1724.5,1025 H1740.5 M1727,1019.5 L1738,1030.5 M1738,1019.5 L1727,1030.5"/></g>
<circle cx="1732.5" cy="1025" r="2.2" fill="#323945"/>
<!-- colorful icons -->
<path d="M1820,1026 H1832 L1834,1030 H1820 Z" fill="#e8b23a"/>
<path d="M1822,1017 V1026 M1819,1020 H1832" stroke="#7fbff0" stroke-width="1.2"/>
<circle cx="1822" cy="1020" r="1.5" fill="#fff"/>
<path d="M1828,1034 L1832,1027 L1836,1034 Z" fill="#f4c93a"/>
<rect x="1842" y="1017" width="15" height="11" fill="#cfd2d7"/>
<path d="M1843,1025 L1847,1020 L1851,1025" stroke="#777" fill="none"/>
<path d="M1848,1034 L1853,1025 L1858,1034 Z" fill="#f0a36a"/>

<!-- ===== TASKBAR ===== -->
<rect x="0" y="1040" width="1920" height="40" fill="#1c1b1a"/>
<g fill="#ffffff">
  <path d="M16,1053.5 L23,1052.5 V1059.5 H16 Z"/><path d="M24,1052.3 L32,1051.2 V1059.5 H24 Z"/>
  <path d="M16,1060.5 H23 V1067.5 L16,1066.5 Z"/><path d="M24,1060.5 H32 V1068.8 L24,1067.7 Z"/>
</g>
<rect x="48" y="1040" width="288" height="40" fill="#f0f0f0"/>
<circle cx="70.5" cy="1055" r="5" fill="none" stroke="#222" stroke-width="1.3"/>
<path d="M66.5,1059 L60.5,1065" stroke="#222" stroke-width="1.5"/>
<text x="88" y="1066" font-size="14.5" fill="#222">Ara</text>
<!-- search illustration -->
<defs><linearGradient id="skyG" x1="0" y1="0" x2="0" y2="1"><stop offset="0" stop-color="#cfeef2"/><stop offset="0.6" stop-color="#e3ecee"/><stop offset="1" stop-color="#f4e6c2"/></linearGradient></defs>
<path d="M260.8,1080 V1060 Q260.8,1041.3 285,1041.3 H310 Q333.8,1041.3 333.8,1060 V1080 Z" fill="url(#skyG)"/>
<path d="M275,1072 Q290,1062 305,1068 L300,1076 H275 Z" fill="#f3df8e"/>
<path d="M266,1074 Q264,1058 272,1052 L284,1051 L290,1056 Q286,1066 284,1072 Z" fill="#c8b49a"/>
<path d="M268,1072 Q268,1060 276,1053 M273,1070 Q274,1060 280,1054" stroke="#5a4634" stroke-width="1" fill="none"/>
<path d="M272,1051.5 L285,1052" stroke="#3a3a3a" stroke-width="1.5"/>
<ellipse cx="285" cy="1057" rx="5.5" ry="4.5" fill="#d8cbb8"/>
<path d="M289,1062 Q292,1055 300,1056 Q306,1048 300,1043 L302,1042 Q312,1046 316,1058 Q318,1068 312,1073 Q300,1076 293,1070 Z" fill="#8e8279"/>
<path d="M303,1044 Q308,1050 308,1062" stroke="#b87a84" stroke-width="2" fill="none"/>
<rect x="292" y="1055" width="3" height="8" fill="#e0a23a"/>
<path d="M318,1069 L320,1072" stroke="#444" stroke-width="1.5"/>
<path d="M258,1080 Q266,1074 280,1074 Q298,1072 312,1074 Q326,1072 334,1078 V1080 Z" fill="#4cae3c"/>
<!-- chrome -->
<circle cx="363" cy="1060" r="12" fill="#db4437"/>
<path d="M363,1060 L373.4,1066 A12,12 0 0 1 351,1061 Z" fill="#0f9d58"/>
<path d="M363,1060 L351.6,1056.5 A12,12 0 0 0 363,1072 Z" fill="#0f9d58"/>
<path d="M363,1060 L374.9,1058 A12,12 0 0 1 363,1072 Z" fill="#f4b400"/>
<circle cx="363" cy="1060" r="5.4" fill="#ffffff"/>
<circle cx="363" cy="1060" r="4.2" fill="#4285f4"/>
<!-- paint -->
<ellipse cx="410" cy="1061" rx="11" ry="9" fill="#b9dcec" transform="rotate(-20 410 1061)"/>
<circle cx="404" cy="1061" r="2" fill="#e04a4a"/><circle cx="408" cy="1056" r="1.8" fill="#f2c230"/><circle cx="413" cy="1055" r="1.8" fill="#5bb55b"/><circle cx="409" cy="1064" r="1.6" fill="#333"/>
<path d="M411,1070 L421,1050" stroke="#e8a23a" stroke-width="2.5"/>
<!-- autocad -->
<rect x="437" y="1040" width="44" height="38" fill="#3a3a3a"/>
<path d="M450,1050 L452,1048 H470 Q471,1048 471,1049 V1070 L469,1072 H451 Q450,1072 450,1071 Z" fill="#d51747"/>
<path d="M452,1048 H470 V1064 H452 Z" fill="#e8174f"/>
<text x="461" y="1062" font-size="13" font-weight="700" fill="#fff" text-anchor="middle">A</text>
<text x="461" y="1070.5" font-size="5" font-weight="700" fill="#fff" text-anchor="middle">CAD</text>
<!-- opera -->
<ellipse cx="510" cy="1060" rx="11" ry="11.5" fill="#e0161d"/>
<ellipse cx="510" cy="1060" rx="4.3" ry="8.3" fill="#1c1b1a"/>
<!-- underlines -->
<g fill="#76b9ed"><rect x="343" y="1078" width="40" height="2"/><rect x="392" y="1078" width="40" height="2"/><rect x="437" y="1078" width="44" height="2"/><rect x="490" y="1078" width="40" height="2"/></g>
<!-- tray -->
<path d="M1759,1063 L1765,1057 L1771,1063" stroke="#fff" stroke-width="1.3" fill="none"/>
<path d="M1782,1057 H1785 L1789,1053.5 V1066.5 L1785,1063 H1782 Z" fill="none" stroke="#fff" stroke-width="1.1"/>
<path d="M1791.5,1057 Q1793.5,1060 1791.5,1063 M1794,1055 Q1797,1060 1794,1065" stroke="#fff" stroke-width="1" fill="none"/>
<text x="1820" y="1055.5" font-size="11.5" fill="#fff" textLength="27" lengthAdjust="spacingAndGlyphs">06:29</text>
<text x="1808" y="1073" font-size="11.5" fill="#fff" textLength="53" lengthAdjust="spacingAndGlyphs">17.04.2026</text>
<path d="M1878.5,1052.5 H1894.5 V1064.5 H1888 L1885,1068 L1883,1064.5 H1878.5 Z" fill="none" stroke="#fff" stroke-width="1.2"/>
<rect x="1915" y="1040" width="1" height="40" fill="#555"/>

</svg>
</body></html>
